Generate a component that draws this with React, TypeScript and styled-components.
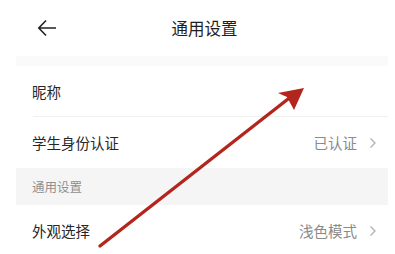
import React from 'react'
import styled, { createGlobalStyle } from 'styled-components'

const GlobalStyle = createGlobalStyle`
  html, body {
    margin: 0;
    padding: 0;
    background: #ffffff;
  }
  body {
    font-family: "Noto Sans CJK SC", "Noto Sans", sans-serif;
    -webkit-font-smoothing: antialiased;
  }
`

const Page = styled.div`
  position: relative;
  width: 395px;
  height: 254px;
  overflow: hidden;
  background: #ffffff;
`

const Header = styled.div`
  height: 56px;
  display: grid;
  grid-template-columns: 1fr auto 1fr;
  align-items: center;
`

const BackButton = styled.div`
  padding-left: 37px;
  display: flex;
  align-items: center;
`

const Title = styled.div`
  font-size: 16.5px;
  font-weight: 400;
  color: #1f1f1f;
  transform: translateX(7px);
`

const Body = styled.div`
  margin: 0 7px 0 16px;
`

const TopStrip = styled.div`
  height: 10px;
  background: #fafafa;
`

const Row = styled.div<{ divider?: boolean }>`
  position: relative;
  height: 51px;
  display: flex;
  align-items: center;
  padding: 0 11px 0 16px;
  &::after {
    content: '';
    display: ${({ divider }) => (divider ? 'block' : 'none')};
    position: absolute;
    left: 17px;
    right: 0;
    bottom: 0;
    height: 1px;
    background: #f0f0f0;
  }
`

const Label = styled.span`
  flex: 1;
  font-size: 14.5px;
  color: #262626;
`

const Value = styled.span`
  font-size: 14.5px;
  color: #8a8a8a;
  margin-right: 12px;
`

const Section = styled.div`
  height: 37px;
  display: flex;
  align-items: center;
  padding-left: 16px;
  background: #f5f5f5;
  font-size: 12.5px;
  color: #8f8f8f;
`

const Overlay = styled.svg`
  position: absolute;
  left: 0;
  top: 0;
  pointer-events: none;
`

const Chevron = () => (
  <svg width="8" height="12" viewBox="0 0 8 12">
    <path d="M1.5 1.5 L6 6 L1.5 10.5" fill="none" stroke="#b0b0b0" strokeWidth="1.3" />
  </svg>
)

const App: React.FC = () => {
  return (
    <Page>
      <GlobalStyle />
      <Header>
        <BackButton>
          <svg width="20" height="18" viewBox="0 0 20 18">
            <path d="M19 9 H2 M9 1.5 L1.8 9 L9 16.5" fill="none" stroke="#222" strokeWidth="1.6" />
          </svg>
        </BackButton>
        <Title>通用设置</Title>
        <div />
      </Header>
      <Body>
        <TopStrip />
        <Row divider>
          <Label>昵称</Label>
        </Row>
        <Row>
          <Label>学生身份认证</Label>
          <Value>已认证</Value>
          <Chevron />
        </Row>
        <Section>通用设置</Section>
        <Row>
          <Label>外观选择</Label>
          <Value>浅色模式</Value>
          <Chevron />
        </Row>
      </Body>
      <Overlay width="395" height="254" viewBox="0 0 395 254">
        <line x1="100" y1="246" x2="297" y2="92" stroke="#b3261e" strokeWidth="3.4" strokeLinecap="round" />
        <path d="M304 88 L278 93 L287 97 L294 110 Z" fill="#b3261e" />
      </Overlay>
    </Page>
  )
}

export default App
